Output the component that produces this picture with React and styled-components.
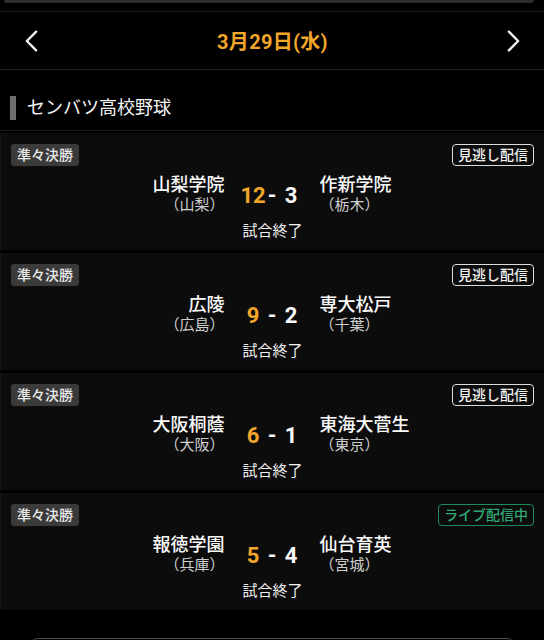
import styled, { createGlobalStyle } from 'styled-components';

const games = [
    { home: '山梨学院', homePref: '山梨', away: '作新学院', awayPref: '栃木', hs: 12, as: 3, live: false },
    { home: '広陵', homePref: '広島', away: '専大松戸', awayPref: '千葉', hs: 9, as: 2, live: false },
    { home: '大阪桐蔭', homePref: '大阪', away: '東海大菅生', awayPref: '東京', hs: 6, as: 1, live: false },
    { home: '報徳学園', homePref: '兵庫', away: '仙台育英', awayPref: '宮城', hs: 5, as: 4, live: true },
];

export default function App() {
    return (
        <>
            <Global />
            <TopEdge />
            <DateBar>
                <Chevron viewBox="0 0 14 24">
                    <polyline points="12,2 2,12 12,22" />
                </Chevron>
                <DateText>3月29日(水)</DateText>
                <Chevron viewBox="0 0 14 24">
                    <polyline points="2,2 12,12 2,22" />
                </Chevron>
            </DateBar>
            <Section>
                <Mark />
                <SectionTitle>センバツ高校野球</SectionTitle>
            </Section>
            <List>
                {games.map((g) => (
                    <Card key={g.home}>
                        <CardHead>
                            <Round>準々決勝</Round>
                            <Stream $live={g.live}>{g.live ? 'ライブ配信中' : '見逃し配信'}</Stream>
                        </CardHead>
                        <Teams>
                            <Team $side="right">
                                <Name>{g.home}</Name>
                                <Pref>（{g.homePref}）</Pref>
                            </Team>
                            <Score>
                                <Num $win>{g.hs}</Num>
                                <Dash>-</Dash>
                                <Num>{g.as}</Num>
                            </Score>
                            <Team $side="left">
                                <Name>{g.away}</Name>
                                <Pref>（{g.awayPref}）</Pref>
                            </Team>
                        </Teams>
                        <Status>試合終了</Status>
                    </Card>
                ))}
            </List>
            <NextPanel />
        </>
    )
}

const Global = createGlobalStyle`
    html, body {
        margin: 0;
        background: #000;
        color: #fff;
        font-family: Roboto, "Noto Sans CJK JP", sans-serif;
    }
    #root {
        width: 544px;
        height: 640px;
        overflow: hidden;
    }
`

const TopEdge = styled.div`
    height: 3px;
    margin: 0 10px 0 4px;
    background: #2c2c2c;
    border-radius: 0 0 6px 6px;
`

const DateBar = styled.div`
    margin-top: 8px;
    height: 57px;
    border-top: 1px solid #1b1b1b;
    border-bottom: 1px solid #1f1f1f;
    display: flex;
    align-items: center;
    justify-content: space-between;
    padding: 0 24px 0 25px;
`

const Chevron = styled.svg`
    width: 13px;
    height: 24px;
    fill: none;
    stroke: #f2f2f2;
    stroke-width: 2.6;
    stroke-linecap: round;
    stroke-linejoin: round;
`

const DateText = styled.div`
    color: #f2a62a;
    font-size: 20px;
    font-weight: 700;
    letter-spacing: 0.3px;
`

const Section = styled.div`
    display: flex;
    align-items: center;
    gap: 11px;
    padding: 26px 10px 10px;
    border-bottom: 1px solid #1a1a1a;
`

const Mark = styled.div`
    width: 6px;
    height: 24px;
    background: #6e6e6e;
`

const SectionTitle = styled.div`
    font-size: 18px;
    line-height: 24px;
    color: #f4f4f4;
`

const List = styled.div`
    display: flex;
    flex-direction: column;
    gap: 3px;
    padding-top: 2px;
`

const Card = styled.div`
    background: #0c0c0c;
    border-left: 1px solid #151515;
    padding: 10px 10px 9px 10px;
`

const CardHead = styled.div`
    display: flex;
    justify-content: space-between;
    align-items: center;
    height: 23px;
`

const Round = styled.div`
    height: 22px;
    line-height: 22px;
    padding: 0 6px;
    background: #3a3a3a;
    border-radius: 3px;
    font-size: 14px;
    font-weight: 500;
    color: #e8e8e8;
`

const Stream = styled.div`
    height: 20px;
    line-height: 20px;
    padding: 0 5px;
    border: 1.5px solid ${p => p.$live ? '#1d8c5c' : '#dcdcdc'};
    border-radius: 4px;
    font-size: 14px;
    font-weight: 500;
    color: ${p => p.$live ? '#2fa874' : '#f0f0f0'};
`

const Teams = styled.div`
    display: grid;
    grid-template-columns: 1fr 95px 1fr;
    margin: 9px -10px 0 -11px;
`

const Team = styled.div`
    display: flex;
    flex-direction: column;
    align-items: ${p => p.$side === 'right' ? 'flex-end' : 'flex-start'};
`

const Name = styled.div`
    font-size: 18px;
    line-height: 20px;
    font-weight: 500;
    color: #fafafa;
`

const Pref = styled.div`
    font-size: 15px;
    line-height: 20px;
    color: #cfcfcf;
`

const Score = styled.div`
    display: flex;
    justify-content: center;
    align-items: center;
    font-size: 22px;
    font-weight: 700;
`

const Num = styled.span`
    width: 28px;
    text-align: center;
    color: ${p => p.$win ? '#f2a62a' : '#fafafa'};
`

const Dash = styled.span`
    width: 10px;
    text-align: center;
    color: #fafafa;
`

const Status = styled.div`
    margin-top: 6px;
    text-align: center;
    font-size: 15px;
    line-height: 20px;
    color: #f0f0f0;
`

const NextPanel = styled.div`
    margin: 28px 29px 0 30px;
    height: 20px;
    border-top: 1px solid #4a4a4a;
    border-radius: 8px 8px 0 0;
`
